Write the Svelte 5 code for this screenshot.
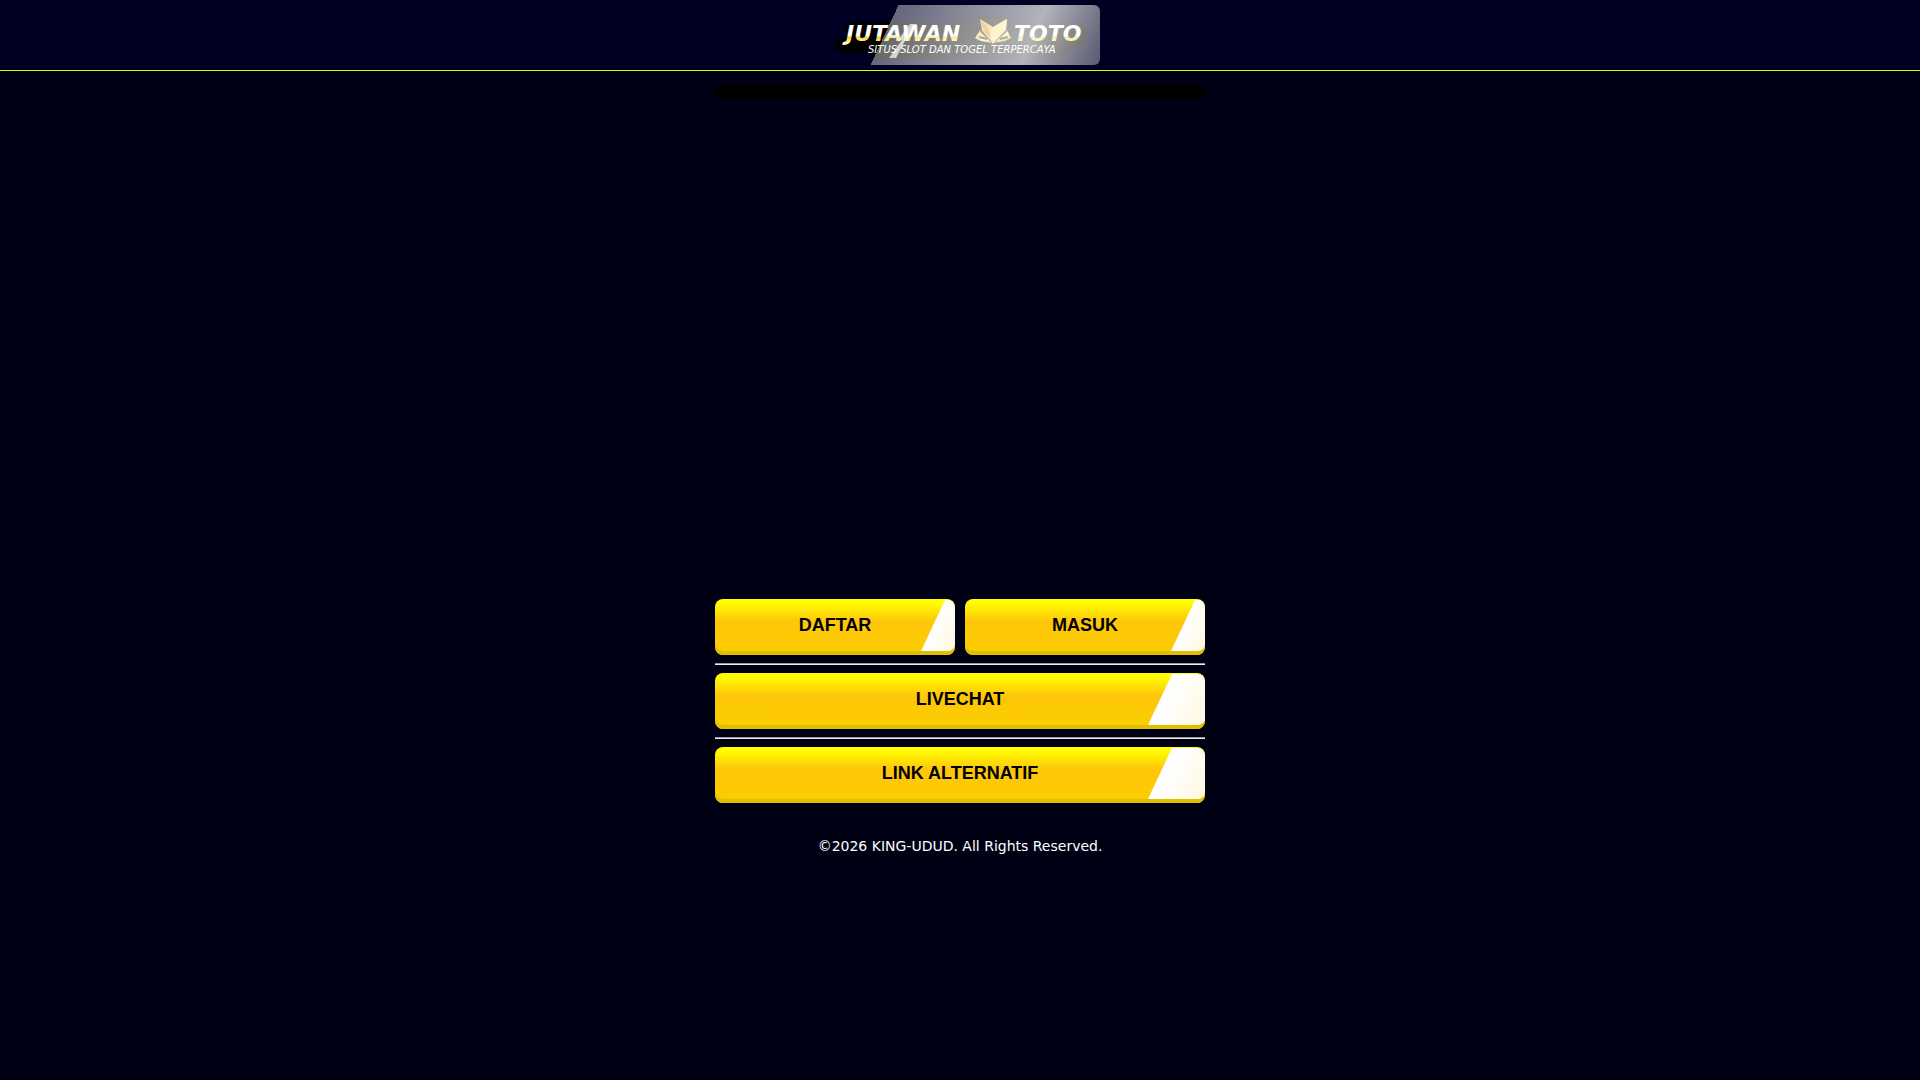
<script>
	const year = 2026;
	const links = [
		[
			{ label: 'DAFTAR', href: '#daftar' },
			{ label: 'MASUK', href: '#masuk' }
		],
		[{ label: 'LIVECHAT', href: '#livechat' }],
		[{ label: 'LINK ALTERNATIF', href: '#alternatif' }]
	];
</script>

<header class="header">
	<a class="logo" href="#home" aria-label="Jutawan Toto">
		<svg width="280" height="60" viewBox="0 0 280 60">
			<defs>
				<linearGradient id="letters" x1="0" y1="20" x2="0" y2="42" gradientUnits="userSpaceOnUse">
					<stop offset="0.5" stop-color="#fff" />
					<stop offset="0.54" stop-color="#f0d23c" />
					<stop offset="0.72" stop-color="#ffe97a" />
					<stop offset="0.9" stop-color="#fff" />
				</linearGradient>
				<linearGradient id="fox" x1="0" y1="0" x2="1" y2="1">
					<stop offset="0" stop-color="#e0a238" />
					<stop offset="0.5" stop-color="#fff0a8" />
					<stop offset="1" stop-color="#d99a20" />
				</linearGradient>
				<filter id="soft">
					<feGaussianBlur stdDeviation="1" />
				</filter>
			</defs>
			<path
				class="shadow"
				filter="url(#soft)"
				d="M30 17H153L157 10H190L195 17H258Q270 20 268 33Q264 43 252 43L244 50Q240 54 230 54H62Q52 52 46 46Q36 50 20 47Q13 45 14 39Q16 34 25 33Q24 20 30 17Z"
			/>
			<text class="word" x="26" y="36">JUTAWAN</text>
			<text class="word" x="194" y="36">TOTO</text>
			<text class="tagline" x="48" y="48">SITUS SLOT DAN TOGEL TERPERCAYA</text>
			<path class="slash" d="M90 19H97L88 34H86L76 53H69L82 35H78Z" />
			<path fill="url(#fox)" d="M160 25L155 33L161 36L173 38L185 36L191 33L187 25Z" />
			<path class="eye" d="M159 32L167 34M188 32L180 34M160 25L173 38L187 25" />
			<path fill="#efc050" d="M160 14L173 22L187 14L186 25L173 39L162 25Z" />
			<path fill="#ffe080" d="M187 14L173 22L170 31L173 38L186 24Z" />
			<path fill="#d08f28" d="M160 14L164 26L171 34L168 22Z" />
		</svg>
	</a>
</header>

<main class="content">
	<div class="slider"></div>

	{#each links as row, i}
		{#if i > 0}
			<hr />
		{/if}
		<div class="row">
			{#each row as link}
				<a class="btn" class:wide={row.length === 1} href={link.href}>{link.label}</a>
			{/each}
		</div>
	{/each}
</main>

<footer class="footer">©{year} KING-UDUD. All Rights Reserved.</footer>

<style>
	:global(body) {
		margin: 0;
		background: #000014;
		font-family: 'DejaVu Sans', sans-serif;
	}

	.header {
		display: flex;
		justify-content: center;
		padding: 5px 0;
		background: #000024;
		border-bottom: 1px solid #d8ff00;
	}

	.logo {
		position: relative;
		display: block;
		height: 60px;
		border-radius: 6px;
		overflow: hidden;
	}

	.logo::after {
		content: '';
		position: absolute;
		inset: 0;
		background: linear-gradient(
			115deg,
			transparent 25.5%,
			rgba(255, 255, 255, 0.4) 25.5%,
			rgba(255, 255, 255, 0.7) 74%,
			rgba(255, 255, 255, 0.35) 100%
		);
	}

	.shadow {
		fill: #000;
	}

	.word {
		font: italic bold 22px 'DejaVu Sans', sans-serif;
		fill: url(#letters);
	}

	.tagline {
		font: italic 10px 'DejaVu Sans', sans-serif;
		fill: #fff;
	}

	.slash {
		fill: #fff;
		opacity: 0.7;
	}

	.eye {
		fill: none;
		stroke: #2b2000;
		stroke-width: 2;
	}

	.content {
		box-sizing: border-box;
		max-width: 490px;
		margin: 0 auto;
		padding-top: 14px;
	}

	.slider {
		height: 14px;
		margin-bottom: 500px;
		border-radius: 7px;
		background: #000;
	}

	.row {
		display: flex;
		gap: 10px;
	}

	.btn {
		position: relative;
		flex: 1;
		box-sizing: border-box;
		height: 56px;
		padding-top: 1px;
		border-radius: 8px;
		overflow: hidden;
		background: linear-gradient(#ff0 6%, #ffc60a 40%, #fbcd00 92%);
		box-shadow: inset 0 -4px #e0bf00;
		color: #000;
		font: bold 18px/51px 'Liberation Sans', sans-serif;
		text-align: center;
		text-decoration: none;
	}

	.btn::after {
		content: '';
		position: absolute;
		top: 1px;
		right: 0;
		bottom: 4px;
		width: 34px;
		border-radius: 0 7px 7px 0;
		background: linear-gradient(115deg, #fff 40%, #fff8e0);
		clip-path: polygon(24px 0, 100% 0, 100% 100%, 0 100%);
	}

	.btn.wide::after {
		width: 57px;
	}

	hr {
		margin: 8px 0;
		border: 0;
		border-top: 1px solid #9a9a9a;
		border-bottom: 1px solid #eee;
	}

	.footer {
		padding: 32px 0;
		color: #fff;
		font-size: 14px;
		line-height: 22px;
		text-align: center;
	}
</style>
